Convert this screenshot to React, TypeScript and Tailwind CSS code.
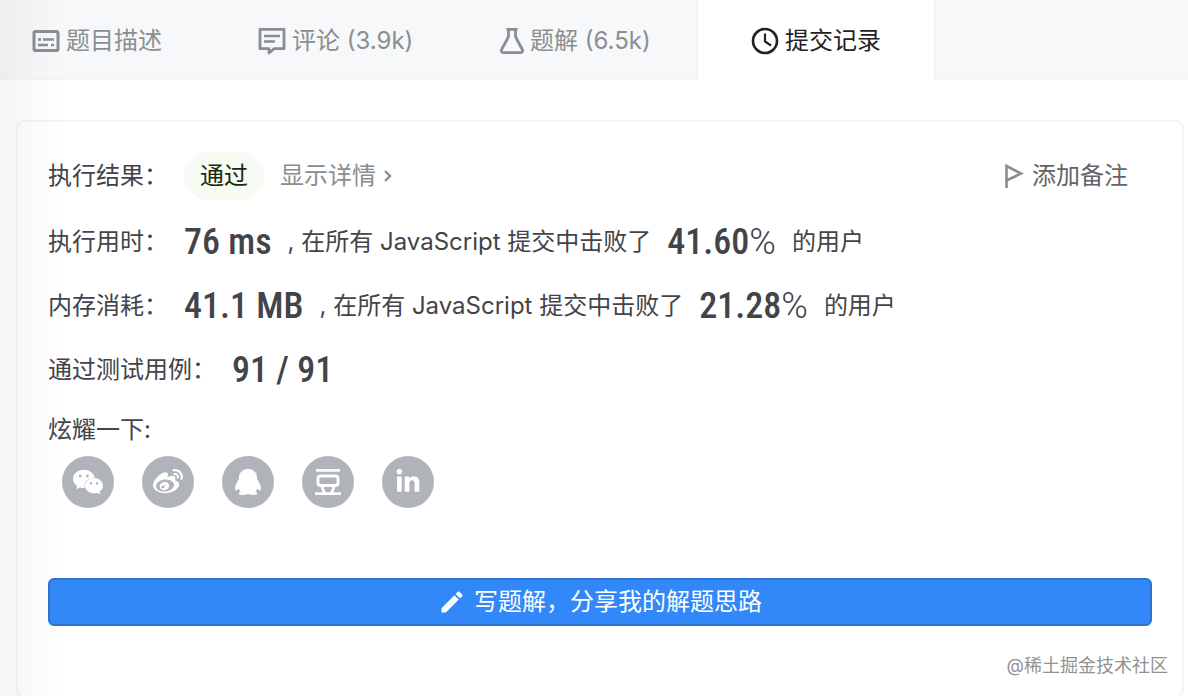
import React from 'react';
import { FaWeibo, FaLinkedinIn } from 'react-icons/fa';
import { SiWechat } from 'react-icons/si';
import { MdEdit } from 'react-icons/md';

const DescriptionIcon = () => (
  <svg width="28" height="24" viewBox="0 0 28 24" fill="none" stroke="currentColor" strokeWidth="3">
    <rect x="2" y="2.5" width="24" height="19" rx="1.5" />
    <path d="M6 10.5h3M11 10.5h11M6 16h10M19 16h3" strokeWidth="2.4" />
  </svg>
);

const CommentIcon = () => (
  <svg width="28" height="28" viewBox="0 0 28 28" fill="none" stroke="currentColor" strokeWidth="2.8" strokeLinejoin="round">
    <path d="M2 2.3h24v19.4H16L11 26v-4.3H2Z" />
    <path d="M6 9h16M6 14.5h11" strokeWidth="2.4" />
  </svg>
);

const FlaskIcon = () => (
  <svg width="24" height="28" viewBox="0 0 24 28" fill="none" stroke="currentColor" strokeWidth="2.8" strokeLinejoin="round">
    <path d="M6.5 2.3h11M8.5 2.3v6.2c0 1.5-.6 2.7-1.400 4L1.800 22.200c-1 1.800-.2 3.400 1.700 3.400h17c1.900 0 2.700-1.600 1.700-3.400l-5.300-9.700c-.8-1.300-1.400-2.500-1.400-4V2.300" />
  </svg>
);

const ClockIcon = () => (
  <svg width="28" height="28" viewBox="0 0 28 28" fill="none" stroke="currentColor" strokeWidth="2.6">
    <circle cx="14" cy="14" r="12" />
    <path d="M14 6.5V14.5L20 18.5" strokeWidth="2.2" />
  </svg>
);

const FlagIcon = () => (
  <svg width="20" height="26" viewBox="0 0 20 26" fill="none" stroke="currentColor" strokeWidth="2.6">
    <path d="M2.500 25V3L17 10.5L2.500 17.5" />
  </svg>
);

const ChevronIcon = () => (
  <svg width="8" height="14" viewBox="0 0 8 14" fill="none" stroke="currentColor" strokeWidth="2.4">
    <path d="M1 2l5 5-5 5" />
  </svg>
);

const QqIcon = () => (
  <svg width="28" height="28" viewBox="0 0 28 28" fill="currentColor">
    <path d="M14 1C8.700 1 5 4.700 5 9.500c0 1-.2 1.700-.6 2.500C2.600 14.600 1 17.700 1 20.200c0 1.900.7 2.600 1.500 2.200.7-.3 1.400-1.100 2-2 .5 1.400 1.200 2.500 2.200 3.400-1.300.5-2 1.100-2 1.900 0 1.400 7.200 1.900 9.300.1 2.100 1.800 9.300 1.300 9.300-.1 0-.8-.7-1.400-2-1.900 1-.9 1.700-2 2.200-3.400.6.900 1.300 1.700 2 2 .8.400 1.500-.3 1.500-2.200 0-2.500-1.600-5.600-3.400-8.200-.4-.8-.6-1.500-.6-2.500C23 4.700 19.300 1 14 1Z" />
  </svg>
);

const DoubanIcon = () => (
  <svg width="28" height="28" viewBox="0 0 28 28" fill="none" stroke="currentColor" strokeWidth="2.8">
    <path d="M2 2.300h24M1 25.700h26M8 19l2.500 6M20 19l-2.500 6" />
    <rect x="4" y="8" width="20" height="9.500" rx="2.500" />
  </svg>
);

const tabs = [
  { label: '题目描述', icon: <DescriptionIcon />, className: 'w-[218px] pl-8' },
  { label: '评论 (3.9k)', icon: <CommentIcon />, className: 'w-[240px] pl-10' },
  { label: '题解 (6.5k)', icon: <FlaskIcon />, className: 'w-[239px] pl-[42px]' },
];

const shares = [
  { name: '微信', icon: <SiWechat size={30} /> },
  { name: '微博', icon: <FaWeibo size={30} /> },
  { name: 'QQ', icon: <QqIcon /> },
  { name: '豆瓣', icon: <DoubanIcon /> },
  { name: '领英', icon: <FaLinkedinIn size={26} /> },
];

const stats = [
  { label: '执行用时：', value: '76 ms', percent: '41.60' },
  { label: '内存消耗：', value: '41.1 MB', percent: '21.28' },
];

const Figure = ({ children }: { children: React.ReactNode }) => (
  <span className="ml-4 font-['Roboto_Condensed','Liberation_Sans_Narrow','Roboto',sans-serif] text-4xl font-medium">
    {children}
  </span>
);

export default function App() {
  return (
    <div className="relative flex min-h-screen flex-col overflow-hidden bg-white font-['Inter','Noto_Sans_CJK_SC',sans-serif] text-2xl text-[#424449]">
      <nav className="flex h-20 shrink-0 border-b border-[#f2f3f4] bg-[#f6f8fa] text-[#8a8e92]">
        {tabs.map((tab) => (
          <button key={tab.label} type="button" className={`flex items-center gap-1.5 whitespace-nowrap pt-0.5 ${tab.className}`}>
            {tab.icon}
            {tab.label}
          </button>
        ))}
        <button type="button" className="-mb-px flex w-[238px] items-center justify-center gap-1.5 border-x border-[#eceef0] bg-white pt-0.5 text-[#202226]">
          <ClockIcon />
          提交记录
        </button>
      </nav>

      <main className="mt-10 mr-1 -mb-0.5 ml-4 flex-1 rounded-lg border-2 border-[#f5f5f5] px-[30px] pt-[30px] pb-16">
        <div className="flex h-12 items-center">
          <span>执行结果：</span>
          <span className="ml-4 flex h-12 items-center rounded-full bg-[#f6fcf3] px-4 text-[#152b0d]">通过</span>
          <a href="#detail" className="ml-4 flex items-center gap-2 text-[#8b8d91]">
            显示详情
            <ChevronIcon />
          </a>
          <button type="button" className="mr-6 ml-auto flex items-center gap-2 text-[#626468]">
            <span className="text-[#8b8d91]"><FlagIcon /></span>
            添加备注
          </button>
        </div>

        <div className="mt-2.5 whitespace-nowrap">
          {stats.map((stat) => (
            <div key={stat.label} className="flex h-16 items-center">
              <span>{stat.label}</span>
              <Figure>{stat.value}</Figure>
              <span className="ml-4">, 在所有 JavaScript 提交中击败了</span>
              <Figure>
                {stat.percent}
                <span className="font-['Roboto'] font-light">%</span>
              </Figure>
              <span className="ml-4">的用户</span>
            </div>
          ))}
          <div className="flex h-16 items-center">
            <span>通过测试用例：</span>
            <Figure>91 / 91</Figure>
          </div>
        </div>

        <p className="mt-0.5 leading-[52px]">炫耀一下:</p>
        <div className="flex gap-7 pl-[14px]">
          {shares.map((share) => (
            <button key={share.name} type="button" aria-label={share.name} className="flex size-[52px] items-center justify-center rounded-full bg-[#b1b3bb] text-white">
              {share.icon}
            </button>
          ))}
        </div>

        <button type="button" className="mt-[70px] flex h-12 w-full items-center justify-center gap-2 rounded-md border-2 border-[#2d73cd] bg-[#3288f8] text-white">
          <MdEdit size={28} />
          写题解，分享我的解题思路
        </button>
      </main>

      {/* shade cast by the pane on the left */}
      <div className="pointer-events-none absolute inset-y-0 left-0 w-16 bg-linear-to-r from-black/4 to-transparent" />
      <p className="absolute right-5 bottom-4 text-lg text-[#929292]">@稀土掘金技术社区</p>
    </div>
  );
}
